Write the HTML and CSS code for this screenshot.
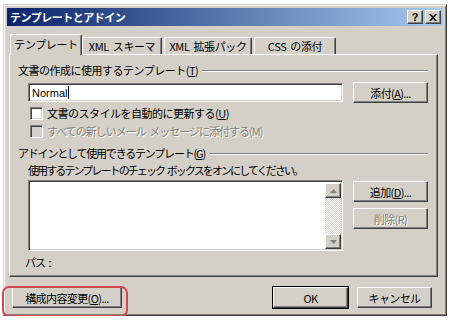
FILE: index.html
```html
<!DOCTYPE html>
<html lang="ja">
<head>
    <meta charset="UTF-8">
    <title>テンプレートとアドイン</title>
    <link rel="stylesheet" href="styles.css">
</head>
<body>
    <div class="window">
        <div class="titlebar">
            <span class="title">テンプレートとアドイン</span>
            <div class="title-buttons">
                <span class="tbtn">?</span>
                <span class="tbtn close">
                    <svg width="8" height="7" viewBox="0 0 8 7"><path d="M0 0h2l2 2.2L6 0h2L5 3.5 8 7H6L4 4.8 2 7H0l3-3.5z" fill="#000"/></svg>
                </span>
            </div>
        </div>

        <div class="tabs">
            <div class="tab active">テンプレート</div>
            <div class="tab">XML スキーマ</div>
            <div class="tab">XML 拡張パック</div>
            <div class="tab">CSS の添付</div>
        </div>

        <div class="panel">
            <div class="group-head"><span class="loose">文書の作成に使用するテンプレート(<u>T</u>)</span><i class="rule"></i></div>
            <div class="row-input">
                <div class="textbox">Normal<span class="caret"></span></div>
                <button class="btn">添付(<u>A</u>)...</button>
            </div>
            <label class="check"><span class="box"></span><span class="loose">文書のスタイルを自動的に更新する(<u>U</u>)</span></label>
            <label class="check disabled"><span class="box"></span><span>すべての新しいメール メッセージに添付する(M)</span></label>

            <div class="group-head second"><span class="tight">アドインとして使用できるテンプレート(<u>G</u>)</span><i class="rule"></i></div>
            <div class="hint">使用するテンプレートのチェック ボックスをオンにしてください。</div>
            <div class="row-list">
                <div class="listbox">
                    <div class="list-body"></div>
                    <div class="scroll">
                        <span class="arrow up"><svg width="7" height="4" viewBox="0 0 7 4"><path d="M3.5 0L7 4H0z" fill="#808080"/></svg></span>
                        <span class="track"></span>
                        <span class="arrow down"><svg width="7" height="4" viewBox="0 0 7 4"><path d="M0 0h7L3.5 4z" fill="#808080"/></svg></span>
                    </div>
                </div>
                <div class="side-buttons">
                    <button class="btn">追加(<u>D</u>)...</button>
                    <button class="btn disabled">削除(R)</button>
                </div>
            </div>
            <div class="path">パス :</div>
        </div>

        <div class="footer">
            <button class="btn wide">構成内容変更(<u>O</u>)...</button>
            <div class="footer-right">
                <button class="btn default">OK</button>
                <button class="btn">キャンセル</button>
            </div>
            <span class="highlight"></span>
        </div>
    </div>
</body>
</html>
```

FILE: styles.css
```css
body {
    margin: 0;
    padding: 4px 0 0 3px;
    background: #fff;
    font-family: "Noto Sans CJK JP", "Liberation Sans", sans-serif;
    font-size: 11px;
    letter-spacing: -1px;
    word-spacing: 2px;
    color: #000;
}

.window {
    width: 444px;
    height: 312px;
    box-sizing: border-box;
    background: #d4d0c8;
    border-top: 1px solid #d4d0c8;
    border-left: 1px solid #d4d0c8;
    border-right: 1px solid #404040;
    border-bottom: 1px solid #404040;
    box-shadow: inset 1px 1px 0 #fff, inset -1px -1px 0 #808080;
    padding: 3px;
    position: relative;
}

.titlebar {
    height: 18px;
    background: linear-gradient(to right, #0a246a, #a6caf0);
    display: flex;
    align-items: center;
    justify-content: space-between;
    padding: 0 2px 0 3px;
}

.title {
    color: #fff;
    font-weight: bold;
    font-size: 11px;
    line-height: 18px;
    letter-spacing: -0.5px;
}

.title-buttons {
    display: flex;
    gap: 2px;
}

.tbtn {
    width: 16px;
    height: 14px;
    box-sizing: border-box;
    background: #d4d0c8;
    border-top: 1px solid #fff;
    border-left: 1px solid #fff;
    border-right: 1px solid #404040;
    border-bottom: 1px solid #404040;
    box-shadow: inset -1px -1px 0 #808080;
    display: flex;
    align-items: center;
    justify-content: center;
    font-family: "Liberation Sans", sans-serif;
    font-weight: bold;
    font-size: 11px;
    letter-spacing: 0;
    line-height: 12px;
}

.tabs {
    display: flex;
    align-items: flex-end;
    margin: 8px 0 0 5px;
    height: 20px;
    position: relative;
    z-index: 2;
}

.tab {
    height: 17px;
    box-sizing: border-box;
    padding: 0;
    text-align: center;
    white-space: nowrap;
    overflow: hidden;
    letter-spacing: -0.4px;
    line-height: 16px;
    border-top: 1px solid #fff;
    border-left: 1px solid #fff;
    border-right: 1px solid #404040;
    box-shadow: inset -1px 0 0 #808080;
    border-radius: 2px 2px 0 0;
    background: #d4d0c8;
    margin-right: 2px;
}

.tab:nth-child(2) { width: 80px; }
.tab:nth-child(3) { width: 88px; }
.tab:nth-child(4) { width: 82px; }

.tab.active {
    height: 21px;
    width: 72px;
    margin: 0 0 -1px -2px;
    padding-top: 1px;
    line-height: 17px;
}

.panel {
    height: 223px;
    margin: 0 5px 0 2px;
    box-sizing: border-box;
    border-top: 1px solid #fff;
    border-left: 1px solid #fff;
    border-right: 1px solid #404040;
    border-bottom: 1px solid #404040;
    box-shadow: inset -1px -1px 0 #808080;
    padding: 8px 9px 0 8px;
    display: flex;
    flex-direction: column;
}

.group-head {
    display: flex;
    align-items: center;
    height: 14px;
    line-height: 14px;
    gap: 4px;
}

.group-head .rule {
    flex: 1;
    border-top: 1px solid #808080;
    border-bottom: 1px solid #fff;
    margin-top: 1px;
}

.group-head.second {
    margin-top: 6px;
}

.loose {
    letter-spacing: -0.5px;
}

.tight {
    letter-spacing: -1.2px;
}

.row-input {
    display: flex;
    align-items: center;
    justify-content: space-between;
    margin: 5px 0 0 10px;
    height: 21px;
}

.textbox {
    width: 315px;
    height: 19px;
    box-sizing: border-box;
    background: #fff;
    border-top: 1px solid #808080;
    border-left: 1px solid #808080;
    border-right: 1px solid #fff;
    border-bottom: 1px solid #fff;
    box-shadow: inset 1px 1px 0 #404040, inset -1px -1px 0 #d4d0c8;
    padding-left: 3px;
    line-height: 16px;
    font-family: "Liberation Sans", sans-serif;
    letter-spacing: 0;
    display: flex;
    align-items: center;
}

.caret {
    width: 1px;
    height: 13px;
    background: #000;
    margin-left: 1px;
}

.btn {
    width: 75px;
    height: 21px;
    box-sizing: border-box;
    padding: 0;
    background: #d4d0c8;
    border-top: 1px solid #fff;
    border-left: 1px solid #fff;
    border-right: 1px solid #404040;
    border-bottom: 1px solid #404040;
    box-shadow: inset -1px -1px 0 #808080;
    font-family: "Noto Sans CJK JP", "Liberation Sans", sans-serif;
    font-size: 11px;
    letter-spacing: -0.6px;
    line-height: 18px;
    color: #000;
    white-space: nowrap;
}

.btn.disabled {
    color: #808080;
    text-shadow: 1px 1px 0 #fff;
}

.btn.default {
    outline: 1px solid #000;
    outline-offset: 0;
}

.btn.wide {
    width: 110px;
}

.check {
    display: flex;
    align-items: center;
    height: 18px;
    margin-left: 12px;
    gap: 4px;
}

.check:first-of-type {
    margin-top: 1px;
}

.box {
    width: 13px;
    height: 13px;
    box-sizing: border-box;
    background: #fff;
    border-top: 1px solid #808080;
    border-left: 1px solid #808080;
    border-right: 1px solid #fff;
    border-bottom: 1px solid #fff;
    box-shadow: inset 1px 1px 0 #404040, inset -1px -1px 0 #d4d0c8;
}

.check.disabled {
    color: #808080;
    text-shadow: 1px 1px 0 #fff;
}

.check.disabled .box {
    background: #d4d0c8;
}

.hint {
    margin: 3px 0 0 10px;
    height: 14px;
    line-height: 14px;
    letter-spacing: -1.9px;
    white-space: nowrap;
}

.row-list {
    display: flex;
    justify-content: space-between;
    margin: 3px 0 0 10px;
}

.listbox {
    width: 315px;
    height: 71px;
    box-sizing: border-box;
    border-top: 1px solid #808080;
    border-left: 1px solid #808080;
    border-right: 1px solid #fff;
    border-bottom: 1px solid #fff;
    box-shadow: inset 1px 1px 0 #404040, inset -1px -1px 0 #d4d0c8;
    background: #fff;
    display: flex;
    padding: 2px 1px 1px 2px;
}

.list-body {
    flex: 1;
}

.scroll {
    width: 16px;
    display: flex;
    flex-direction: column;
}

.arrow {
    height: 15px;
    box-sizing: border-box;
    background: #d4d0c8;
    border-top: 1px solid #fff;
    border-left: 1px solid #fff;
    border-right: 1px solid #404040;
    border-bottom: 1px solid #404040;
    box-shadow: inset -1px -1px 0 #808080;
    display: flex;
    align-items: center;
    justify-content: center;
}

.track {
    flex: 1;
    background: repeating-conic-gradient(#fff 0 25%, #d4d0c8 0 50%) 0 0 / 2px 2px;
}

.side-buttons {
    display: flex;
    flex-direction: column;
    gap: 6px;
    padding-top: 1px;
}

.path {
    margin: 4px 0 0 7px;
    height: 14px;
    line-height: 14px;
}

.footer {
    display: flex;
    justify-content: space-between;
    align-items: center;
    margin: 10px 0 0 5px;
    padding-right: 11px;
    height: 21px;
}

.footer-right {
    display: flex;
    gap: 9px;
}

.highlight {
    position: absolute;
    left: -2px;
    bottom: -2px;
    width: 126px;
    height: 31px;
    box-sizing: border-box;
    border: 2px solid #d0494e;
    border-radius: 7px;
    pointer-events: none;
}
```
